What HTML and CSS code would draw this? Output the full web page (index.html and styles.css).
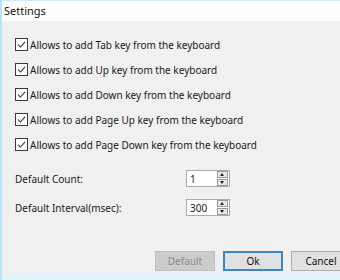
FILE: index.html
```html
<!DOCTYPE html>
<html>
<head>
<meta charset="utf-8">
<link rel="stylesheet" href="styles.css">
</head>
<body>
<div class="window">
  <div class="titlebar">Settings</div>
  <div class="content">
    <div class="checks">
      <label class="check"><span class="box"><svg viewBox="0 0 12 12" width="12" height="12"><path d="M2.2 6.2 L4.8 8.8 L9.9 3.2" fill="none" stroke="#2b2b2b" stroke-width="1.1"/></svg></span>Allows to add Tab key from the keyboard</label>
      <label class="check"><span class="box"><svg viewBox="0 0 12 12" width="12" height="12"><path d="M2.2 6.2 L4.8 8.8 L9.9 3.2" fill="none" stroke="#2b2b2b" stroke-width="1.1"/></svg></span>Allows to add Up key from the keyboard</label>
      <label class="check"><span class="box"><svg viewBox="0 0 12 12" width="12" height="12"><path d="M2.2 6.2 L4.8 8.8 L9.9 3.2" fill="none" stroke="#2b2b2b" stroke-width="1.1"/></svg></span>Allows to add Down key from the keyboard</label>
      <label class="check"><span class="box"><svg viewBox="0 0 12 12" width="12" height="12"><path d="M2.2 6.2 L4.8 8.8 L9.9 3.2" fill="none" stroke="#2b2b2b" stroke-width="1.1"/></svg></span>Allows to add Page Up key from the keyboard</label>
      <label class="check"><span class="box"><svg viewBox="0 0 12 12" width="12" height="12"><path d="M2.2 6.2 L4.8 8.8 L9.9 3.2" fill="none" stroke="#2b2b2b" stroke-width="1.1"/></svg></span>Allows to add Page Down key from the keyboard</label>
    </div>
    <div class="fields">
      <div class="field">
        <span class="flabel">Default Count:</span>
        <div class="spin"><span class="val">1</span><span class="arrows"><span class="arr up"></span><span class="arr down"></span></span></div>
      </div>
      <div class="field">
        <span class="flabel">Default Interval(msec):</span>
        <div class="spin"><span class="val">300</span><span class="arrows"><span class="arr up"></span><span class="arr down"></span></span></div>
      </div>
    </div>
    <div class="buttons">
      <div class="btn disabled">Default</div>
      <div class="btn primary">Ok</div>
      <div class="btn">Cancel</div>
    </div>
  </div>
  <div class="bottom"></div>
</div>
</body>
</html>
```
FILE: styles.css
```css
html, body {
  margin: 0;
  padding: 0;
}
body {
  width: 340px;
  height: 280px;
  overflow: hidden;
  font-family: "Noto Sans", "Liberation Sans", sans-serif;
  font-size: 10px;
  color: #1a1a1a;
  background: #f0f0f0;
}
.window {
  width: 340px;
  height: 280px;
  display: flex;
  flex-direction: column;
  border-left: 2px solid #b8e6f8;
  box-sizing: border-box;
}
.titlebar {
  height: 20px;
  background: #ffffff;
  border-top: 1px solid #cdeffb;
  padding-left: 2px;
  font-size: 11px;
  line-height: 19px;
  color: #111;
}
.content {
  flex: 1;
  background: #f0f0f0;
  display: flex;
  flex-direction: column;
  padding: 17px 0 0 13px;
}
.checks {
  display: flex;
  flex-direction: column;
  gap: 12px;
}
.check {
  display: flex;
  align-items: center;
  height: 13px;
  white-space: nowrap;
}
.box {
  width: 11px;
  height: 11px;
  border: 1px solid #3a3a3a;
  background: #fff;
  margin-right: 2px;
  display: flex;
}
.box svg {
  width: 11px;
  height: 11px;
}
.fields {
  margin-top: 19px;
  display: flex;
  flex-direction: column;
  gap: 12px;
}
.field {
  display: flex;
  align-items: center;
  height: 17px;
  white-space: nowrap;
}
.flabel {
  width: 171px;
  padding-left: 0;
}
.spin {
  width: 44px;
  height: 17px;
  box-sizing: border-box;
  border: 1px solid #a9a9a9;
  background: #fff;
  display: flex;
  align-items: center;
  justify-content: space-between;
  padding: 0 1px 0 3px;
}
.arrows {
  display: flex;
  flex-direction: column;
  gap: 1px;
}
.arr {
  width: 9px;
  height: 5px;
  border: 1px solid #9a9a9a;
  background: #e8e8e8;
  position: relative;
}
.arr::after {
  content: "";
  position: absolute;
  left: 2px;
  width: 0;
  height: 0;
  border-left: 2.5px solid transparent;
  border-right: 2.5px solid transparent;
}
.arr.up::after {
  top: 1px;
  border-bottom: 3px solid #222;
}
.arr.down::after {
  top: 1px;
  border-top: 3px solid #222;
}
.buttons {
  margin-top: auto;
  margin-bottom: 3px;
  display: flex;
  gap: 8px;
  padding-left: 140px;
}
.btn {
  flex: none;
  width: 60px;
  height: 20px;
  box-sizing: border-box;
  border: 1px solid #adadad;
  background: #e1e1e1;
  display: flex;
  align-items: center;
  justify-content: center;
  color: #111;
}
.btn.disabled {
  background: #cccccc;
  border-color: #bfbfbf;
  color: #8a8a8a;
}
.btn.primary {
  border: 2px solid #3a86c8;
}
.bottom {
  height: 6px;
  background: #dff3fb;
}
```
